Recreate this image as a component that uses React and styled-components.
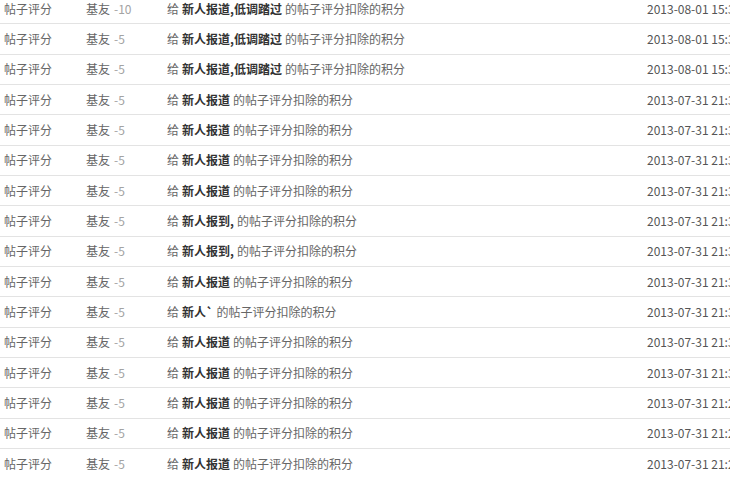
import styled, { createGlobalStyle } from "styled-components";

const GlobalStyle = createGlobalStyle`
  html, body {
    margin: 0;
    padding: 0;
    background: #fff;
    overflow: hidden;
  }
  body {
    font-family: "Noto Sans CJK SC", "Microsoft YaHei", sans-serif;
    font-size: 12px;
    color: #666;
  }
`;

const List = styled.div`
  width: 820px;
  margin-top: -6px;
`;

const Row = styled.div`
  display: grid;
  grid-template-columns: 82px 81px 480px 1fr;
  align-items: center;
  height: 30.35px;
  box-sizing: border-box;
  padding-left: 4px;
  border-bottom: 1px solid #e3e3e3;
  white-space: nowrap;
`;

const Cell = styled.div`
  color: #666;
  line-height: 18px;
`;

const Amount = styled.span`
  color: #a3a3a3;
  margin-left: 4px;
`;

const Target = styled.b`
  color: #333;
  font-weight: bold;
  margin: 0 3px 0 3px;
`;

const Time = styled.div`
  color: #555;
  line-height: 18px;
`;

const rows = [
  ["-10", "新人报道,低调踏过", "2013-08-01 15:36"],
  ["-5", "新人报道,低调踏过", "2013-08-01 15:36"],
  ["-5", "新人报道,低调踏过", "2013-08-01 15:36"],
  ["-5", "新人报道", "2013-07-31 21:39"],
  ["-5", "新人报道", "2013-07-31 21:38"],
  ["-5", "新人报道", "2013-07-31 21:38"],
  ["-5", "新人报道", "2013-07-31 21:38"],
  ["-5", "新人报到,", "2013-07-31 21:37"],
  ["-5", "新人报到,", "2013-07-31 21:37"],
  ["-5", "新人报道", "2013-07-31 21:36"],
  ["-5", "新人`", "2013-07-31 21:35"],
  ["-5", "新人报道", "2013-07-31 21:33"],
  ["-5", "新人报道", "2013-07-31 21:33"],
  ["-5", "新人报道", "2013-07-31 21:29"],
  ["-5", "新人报道", "2013-07-31 21:29"],
  ["-5", "新人报道", "2013-07-31 21:28"],
];

export default function App() {
  return (
    <>
      <GlobalStyle />
      <List>
        {rows.map(([amount, target, time], i) => (
          <Row key={i}>
            <Cell>帖子评分</Cell>
            <Cell>
              基友<Amount>{amount}</Amount>
            </Cell>
            <Cell>
              给<Target>{target}</Target>的帖子评分扣除的积分
            </Cell>
            <Time>{time}</Time>
          </Row>
        ))}
      </List>
    </>
  );
}
